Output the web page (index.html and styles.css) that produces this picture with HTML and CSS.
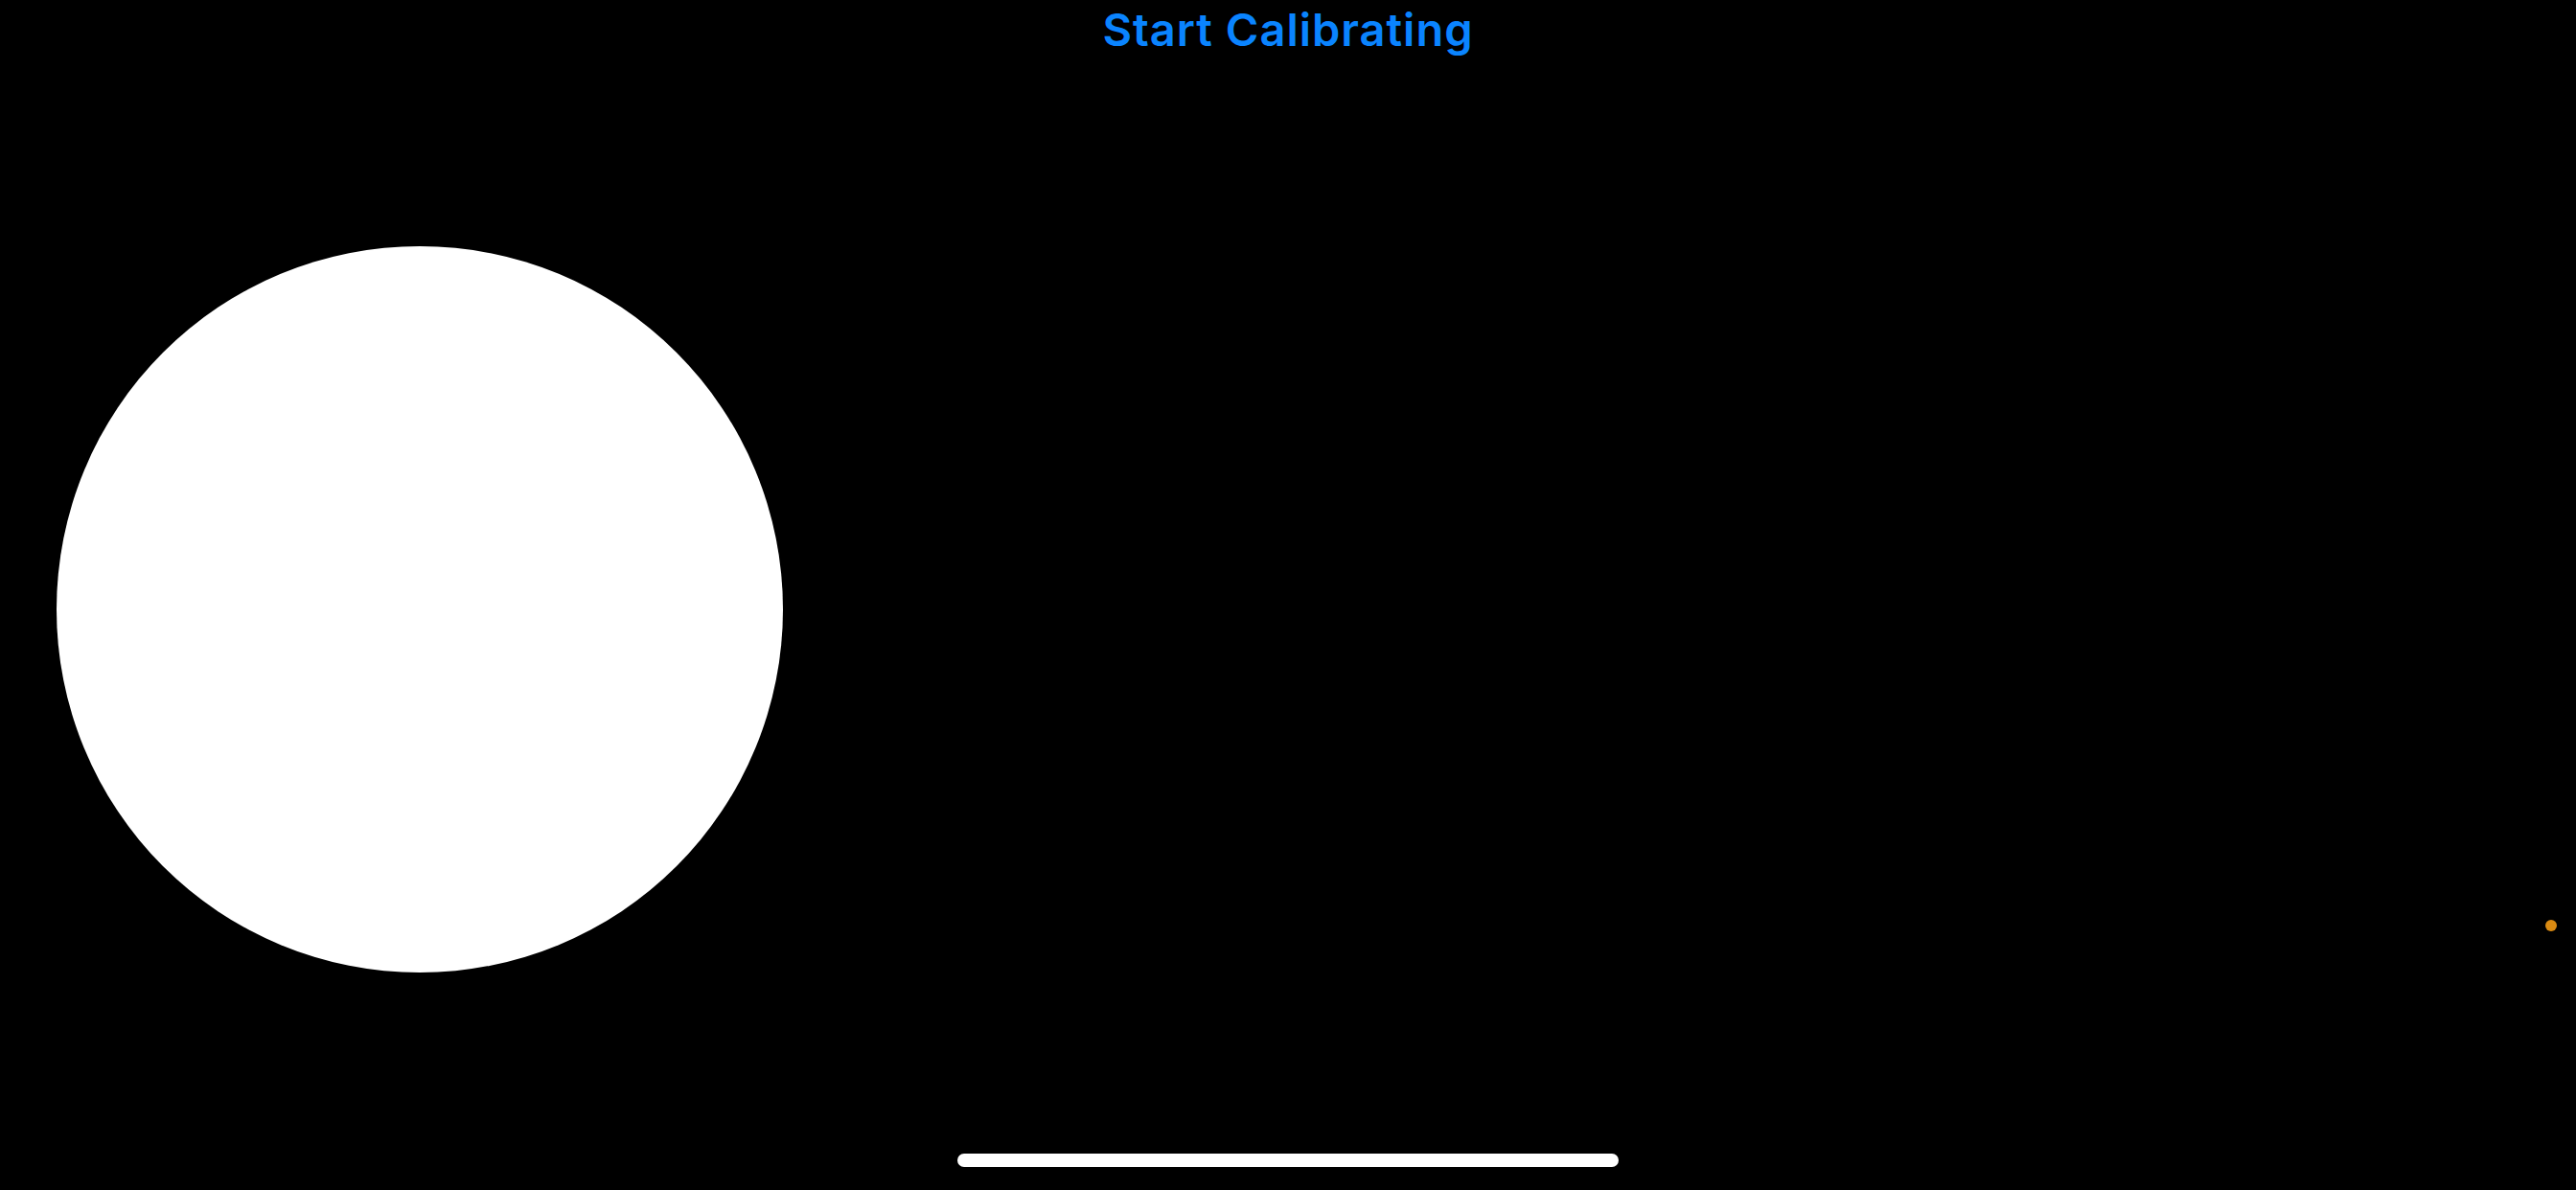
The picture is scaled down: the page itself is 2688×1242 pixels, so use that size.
FILE: index.html
```html
<!DOCTYPE html>
<html lang="en">
<head>
<meta charset="utf-8">
<title>Start Calibrating</title>
<link rel="stylesheet" href="styles.css">
</head>
<body>
<div class="screen">
  <header class="title-bar">
    <button class="start-btn" type="button">Start Calibrating</button>
  </header>
  <main class="stage">
    <div class="target-circle"></div>
  </main>
  <footer class="home-area">
    <div class="home-indicator"></div>
  </footer>
  <div class="privacy-dot"></div>
</div>
</body>
</html>
```

FILE: styles.css
```css
html, body {
  margin: 0;
  padding: 0;
  background: #000;
}

.screen {
  position: relative;
  width: 2688px;
  height: 1242px;
  display: flex;
  flex-direction: column;
  background: #000;
  overflow: hidden;
}

.title-bar {
  display: flex;
  justify-content: center;
  padding-top: 2px;
}

.start-btn {
  background: none;
  border: 0;
  padding: 0;
  margin: 0;
  font-family: Inter, "Noto Sans", "Liberation Sans", sans-serif;
  font-size: 47px;
  font-weight: 600;
  line-height: normal;
  color: #0a84ff;
  letter-spacing: 1px;
}

.stage {
  display: flex;
  padding-top: 198px;
  padding-left: 59px;
}

.target-circle {
  width: 758px;
  height: 758px;
  border-radius: 50%;
  background: #fff;
}

.home-area {
  margin-top: auto;
  display: flex;
  justify-content: center;
  padding-bottom: 24px;
}

.home-indicator {
  width: 690px;
  height: 14px;
  border-radius: 7px;
  background: #fff;
}

.privacy-dot {
  position: absolute;
  left: 2656px;
  top: 960px;
  width: 12px;
  height: 12px;
  border-radius: 50%;
  background: #d98a12;
}
```
